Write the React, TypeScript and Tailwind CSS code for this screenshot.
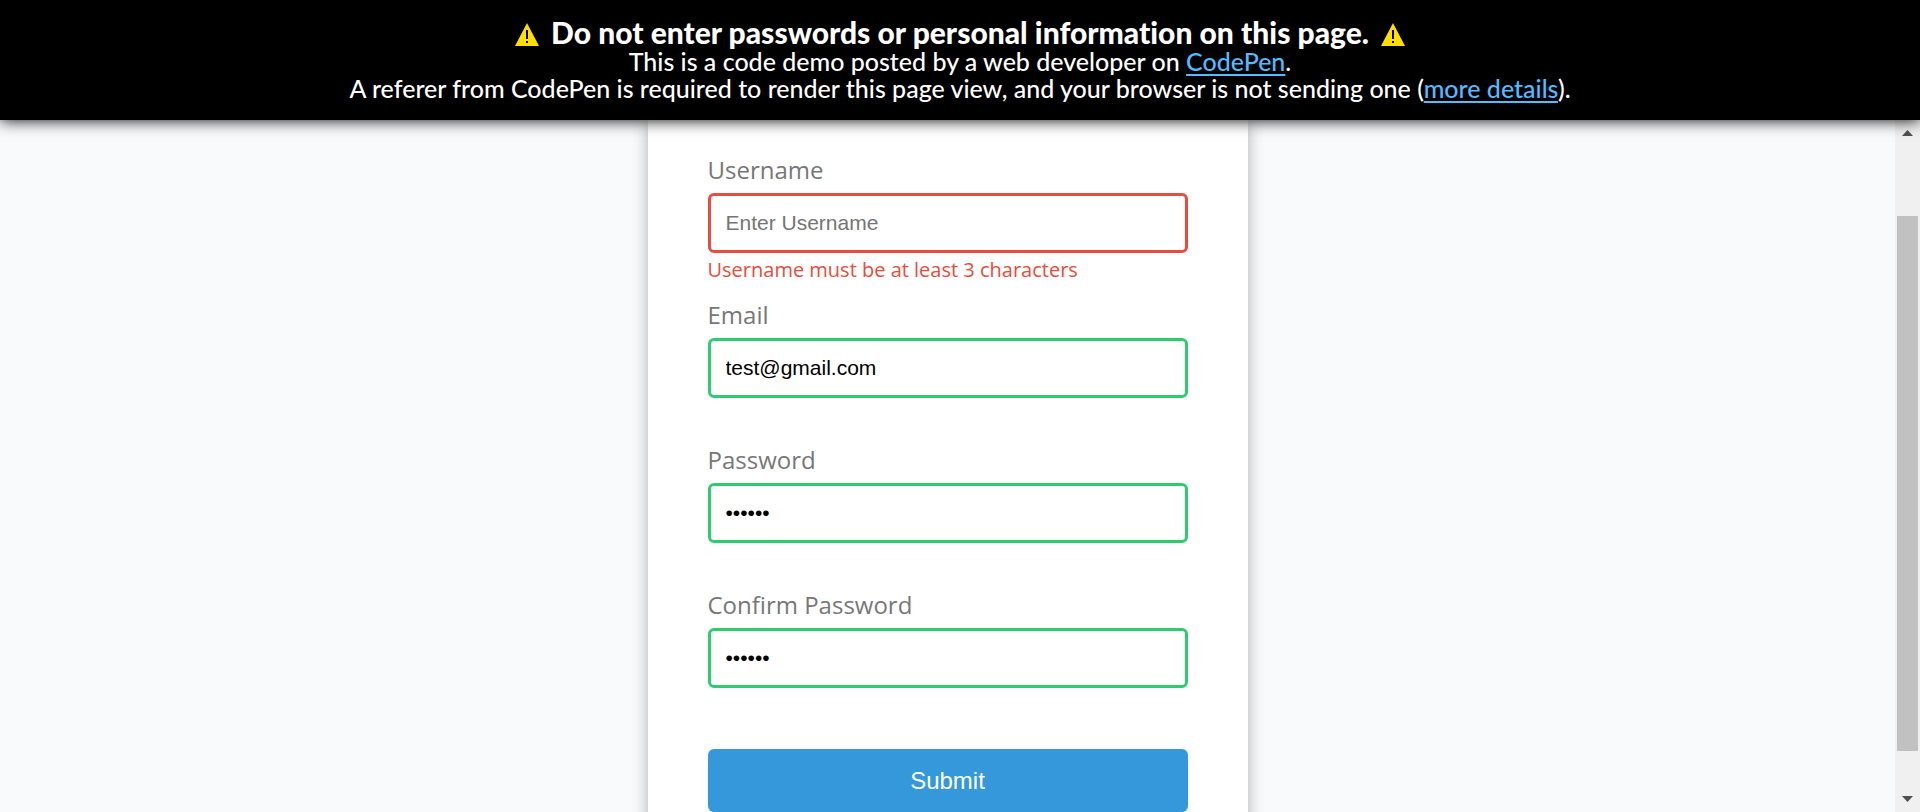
import type { ReactNode } from "react";

type FieldProps = {
  id: string;
  label: string;
  type: string;
  placeholder: string;
  value?: string;
  error?: string;
};

function Field({ id, label, type, placeholder, value, error }: FieldProps) {
  return (
    <div className="flex h-[145px] flex-col">
      <label htmlFor={id} className="mb-[5px] text-2xl leading-[36px] text-[#777777]">
        {label}
      </label>
      <input
        id={id}
        type={type}
        placeholder={placeholder}
        defaultValue={value}
        aria-invalid={Boolean(error)}
        className={
          "h-15 w-full rounded-md border-3 bg-white px-[15px] font-['Liberation_Sans',Arial,sans-serif] text-[21px] text-black outline-none placeholder:text-[#757575] " +
          (error ? "border-[#e74c3c]" : "border-[#2ecc71]")
        }
      />
      {error && <small className="mt-1 text-xl leading-[25px] text-[#e74c3c]">{error}</small>}
    </div>
  );
}

function WarningIcon() {
  return (
    <svg viewBox="0 0 24 23" className="h-[23px] w-6 shrink-0" aria-hidden="true">
      <path d="M12 0 24 23H0Z" fill="#ffdf00" />
      <path d="M11 7h2v9h-2zM11 18h2v2h-2z" fill="#000" />
    </svg>
  );
}

function BannerLink({ href, children }: { href: string; children: ReactNode }) {
  return (
    <a href={href} className="text-[#55bbff] underline decoration-2 underline-offset-3">
      {children}
    </a>
  );
}

function Banner() {
  return (
    <header className="relative z-10 flex min-h-30 shrink-0 flex-col items-center bg-black pt-[18px] text-center font-['Lato','Open_Sans',sans-serif] text-[25px] leading-[27px] font-medium text-white shadow-[0_0_15px_#000] [font-variant-ligatures:none]">
      <div className="mb-0.5 flex items-end gap-3 text-[30px] leading-[28px] font-bold">
        <WarningIcon />
        <strong>Do not enter passwords or personal information on this page.</strong>
        <WarningIcon />
      </div>
      <p>
        This is a code demo posted by a web developer on <BannerLink href="#codepen">CodePen</BannerLink>.
      </p>
      <p>
        A referer from CodePen is required to render this page view, and your browser is not sending one (
        <BannerLink href="#details">more details</BannerLink>).
      </p>
    </header>
  );
}

function ScrollRail() {
  return (
    <div className="flex w-[25px] shrink-0 flex-col items-center bg-[#f0f0f0] py-2.5" aria-hidden="true">
      <svg viewBox="0 0 11 6" className="h-1.5 w-[11px]">
        <path d="M5.500 0 11 6H0Z" fill="#505050" />
      </svg>
      <div className="mt-20 mb-[45px] w-[21px] grow bg-[#c1c1c1]" />
      <svg viewBox="0 0 11 6" className="h-1.5 w-[11px]">
        <path d="M0 0H11L5.500 6Z" fill="#505050" />
      </svg>
    </div>
  );
}

export default function App() {
  return (
    <div className="flex h-screen flex-col overflow-hidden bg-[#f9fafb] font-['Open_Sans','Noto_Sans',sans-serif]">
      <Banner />
      <div className="flex min-h-0 grow">
        <main className="flex grow justify-center">
          <form className="h-max w-full max-w-[600px] bg-white px-15 pt-8 pb-15 shadow-[0_3px_15px_rgba(0,0,0,0.3)]">
            <Field
              id="username"
              label="Username"
              type="text"
              placeholder="Enter Username"
              error="Username must be at least 3 characters"
            />
            <Field id="email" label="Email" type="text" placeholder="Enter email" value="test@gmail.com" />
            <Field id="password" label="Password" type="password" placeholder="Enter password" value="123456" />
            <Field
              id="password2"
              label="Confirm Password"
              type="password"
              placeholder="Enter password again"
              value="123456"
            />
            <button
              type="button"
              className="mt-[17px] h-[63px] w-full rounded-md bg-[#3498db] font-['Liberation_Sans',Arial,sans-serif] text-2xl text-white"
            >
              Submit
            </button>
          </form>
        </main>
        <ScrollRail />
      </div>
    </div>
  );
}
